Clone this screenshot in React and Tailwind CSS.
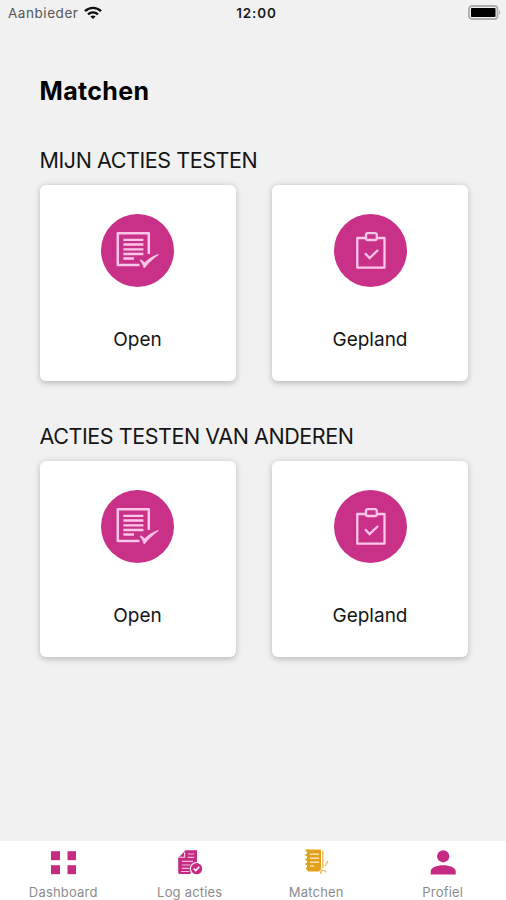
import React from 'react';

const OpenIcon = () => (
  <svg width="73" height="73" viewBox="0 0 73 73" fill="none" stroke="#fcc6ea">
    <path d="M47.8 40V19.2H16.8V51H38.5" strokeWidth="2.5" strokeLinejoin="round" />
    <path d="M22.4 25.8H42.4M22.4 30.5H42.4M22.4 35.3H42.4M22.4 40H42.4M22.4 44.5H33" strokeWidth="2.3" />
    <path d="M39 46C41 46.2 42.3 47.3 43.6 49C47.3 45.3 51.8 42.3 57.3 40.6C52 44.5 47.3 48.6 43.2 54C42.3 51 41 48.3 39 46Z" fill="#fcc6ea" strokeWidth="1" />
  </svg>
);

const PlannedIcon = () => (
  <svg width="73" height="73" viewBox="0 0 73 73" fill="none" stroke="#fcc6ea" strokeWidth="2.3">
    <path d="M31.5 24H23.3V53.7H50.5V24H43" strokeLinejoin="round" />
    <rect x="32" y="19.2" width="10.8" height="6.8" rx="1.8" />
    <path d="M31 39.3L35.6 44.1L44 36" />
  </svg>
);

const DashboardIcon = () => (
  <svg width="26" height="26" viewBox="0 0 26 26" fill="#c62b84">
    <rect x="1" y="2.2" width="9" height="9" />
    <rect x="17.5" y="2.2" width="8.5" height="9" />
    <rect x="1" y="16.2" width="9" height="9" />
    <rect x="17.5" y="16.2" width="8.5" height="9" />
  </svg>
);

const LogIcon = () => (
  <svg width="26" height="26" viewBox="0 0 26 26">
    <path d="M8.5 1.2H20V14L13 25H3Q1.2 25 1.2 23.5V9Z" fill="#c62b84" />
    <path d="M2.6 8.2H7.6V3.2" fill="none" stroke="#fbd3e8" strokeWidth="1.1" />
    <path d="M10.8 5H17.2M10.8 8.4H17.2M4.8 12.4H16M4.8 16H13.5M4.8 19.4H12.5M4 22.5H12.5" stroke="#f4b5d7" strokeWidth="1.2" />
    <circle cx="19.6" cy="19.7" r="6.2" fill="#c62b84" stroke="#fff" strokeWidth="1.1" />
    <path d="M16.8 19.6L18.8 21.6L22.3 17.7" fill="none" stroke="#fff" strokeWidth="1.5" />
  </svg>
);

const MatchIcon = () => (
  <svg width="26" height="26" viewBox="0 0 26 26" fill="none">
    <path d="M4 .5H18V20L16 22.5H6Q4 22.5 4 20Z" fill="#e2a11d" />
    <path d="M2.5 1.5H6M2.5 6H6M2.5 10.5H6M2.5 15H6M3 19.5H6" stroke="#e2a11d" strokeWidth="2" />
    <path d="M7 5.2H16M7 9.3H16M7 13.2H16M7 17H11" stroke="#fbe2ac" strokeWidth="1.4" />
    <path d="M19.8 1.5V19M17 20.5L20.5 22M18 25L17.4 22M22 17L25 12M21.5 21L23 23.5" stroke="#edbd62" strokeWidth="1.4" />
  </svg>
);

const ProfileIcon = () => (
  <svg width="26" height="26" viewBox="0 0 26 26" fill="#c62b84">
    <circle cx="13.2" cy="7.3" r="6.1" />
    <path d="M.7 25.5V22.5C.7 18.5 7 16.3 13.2 16.3S25.7 18.5 25.7 22.5V25.5Z" />
  </svg>
);

const sections = ['MIJN ACTIES TESTEN', 'ACTIES TESTEN VAN ANDEREN'];

const cards = [
  { icon: OpenIcon, label: 'Open' },
  { icon: PlannedIcon, label: 'Gepland' },
];

const tabs = [
  { icon: DashboardIcon, label: 'Dashboard' },
  { icon: LogIcon, label: 'Log acties' },
  { icon: MatchIcon, label: 'Matchen' },
  { icon: ProfileIcon, label: 'Profiel' },
];

const StatusBar = () => (
  <div className="grid h-[26px] grid-cols-3 items-center pl-2 pr-1 text-[13.5px] leading-[26px]">
    <div className="flex items-center gap-1.5 text-[#555]">
      <span className="tracking-[0.55px]">Aanbieder</span>
      <svg className="-mt-0.5" width="18" height="13" viewBox="0 0 18 13" fill="none" stroke="#111" strokeWidth="2.4">
        <path d="M1 5.1C5.5.8 12.5.8 17 5.1" />
        <path d="M4 8.4C7 5.7 11 5.7 14 8.4" />
        <path d="M6.4 10.5Q9 8.3 11.6 10.5L9 12.9Z" fill="#111" stroke="none" />
      </svg>
    </div>
    <div className="pl-[3px] text-center font-semibold tracking-[0.8px] text-[#1c1c1c]">12:00</div>
    <div className="flex justify-end">
      <svg className="-mt-px" width="34" height="15" viewBox="0 0 34 15">
        <rect x="1" y="1" width="28.5" height="13" rx="3" fill="#f1f1f1" stroke="#adadad" strokeWidth="1.8" />
        <rect x="3" y="3" width="24.5" height="9" rx="0.8" fill="#000" />
        <path d="M31 5.2Q33.5 7.5 31 9.8Z" fill="#adadad" />
      </svg>
    </div>
  </div>
);

export default function App() {
  return (
    <div className="flex h-[900px] w-[506px] flex-col overflow-hidden bg-[#f1f1f1] font-['Inter',sans-serif] text-[#151515]">
      <StatusBar />

      <main className="flex-1 pl-[39.5px] pr-[38px] pt-[49px]">
        <h1 className="text-[25px] font-bold leading-8 tracking-[0.35px] text-black">Matchen</h1>

        {sections.map((title, index) => (
          <section key={title} className={index === 0 ? 'mt-9' : 'mt-[38.5px]'}>
            <h2 className="h-[42px] whitespace-nowrap text-[21.5px] leading-[34px] tracking-[-0.43px]">{title}</h2>
            <div className="grid grid-cols-2 gap-[36.5px]">
              {cards.map((card) => (
                <div
                  key={card.label}
                  className="flex h-[195.5px] flex-col items-center rounded-md bg-white pt-[29.4px] shadow-[0_1.5px_6px_rgba(0,0,0,0.24)]"
                >
                  <div className="h-[73px] w-[73px] rounded-full bg-[#c93087]">
                    <card.icon />
                  </div>
                  <span className="mt-[38.4px] text-[19px] leading-7">{card.label}</span>
                </div>
              ))}
            </div>
          </section>
        ))}
      </main>

      <nav className="grid h-[59px] grid-cols-4 bg-white">
        {tabs.map((tab) => (
          <div key={tab.label} className="flex flex-col items-center pt-2">
            <tab.icon />
            <span className="mt-2 text-[13px] leading-[18px] tracking-[0.2px] text-[#8c8c8c]">{tab.label}</span>
          </div>
        ))}
      </nav>
    </div>
  );
}
